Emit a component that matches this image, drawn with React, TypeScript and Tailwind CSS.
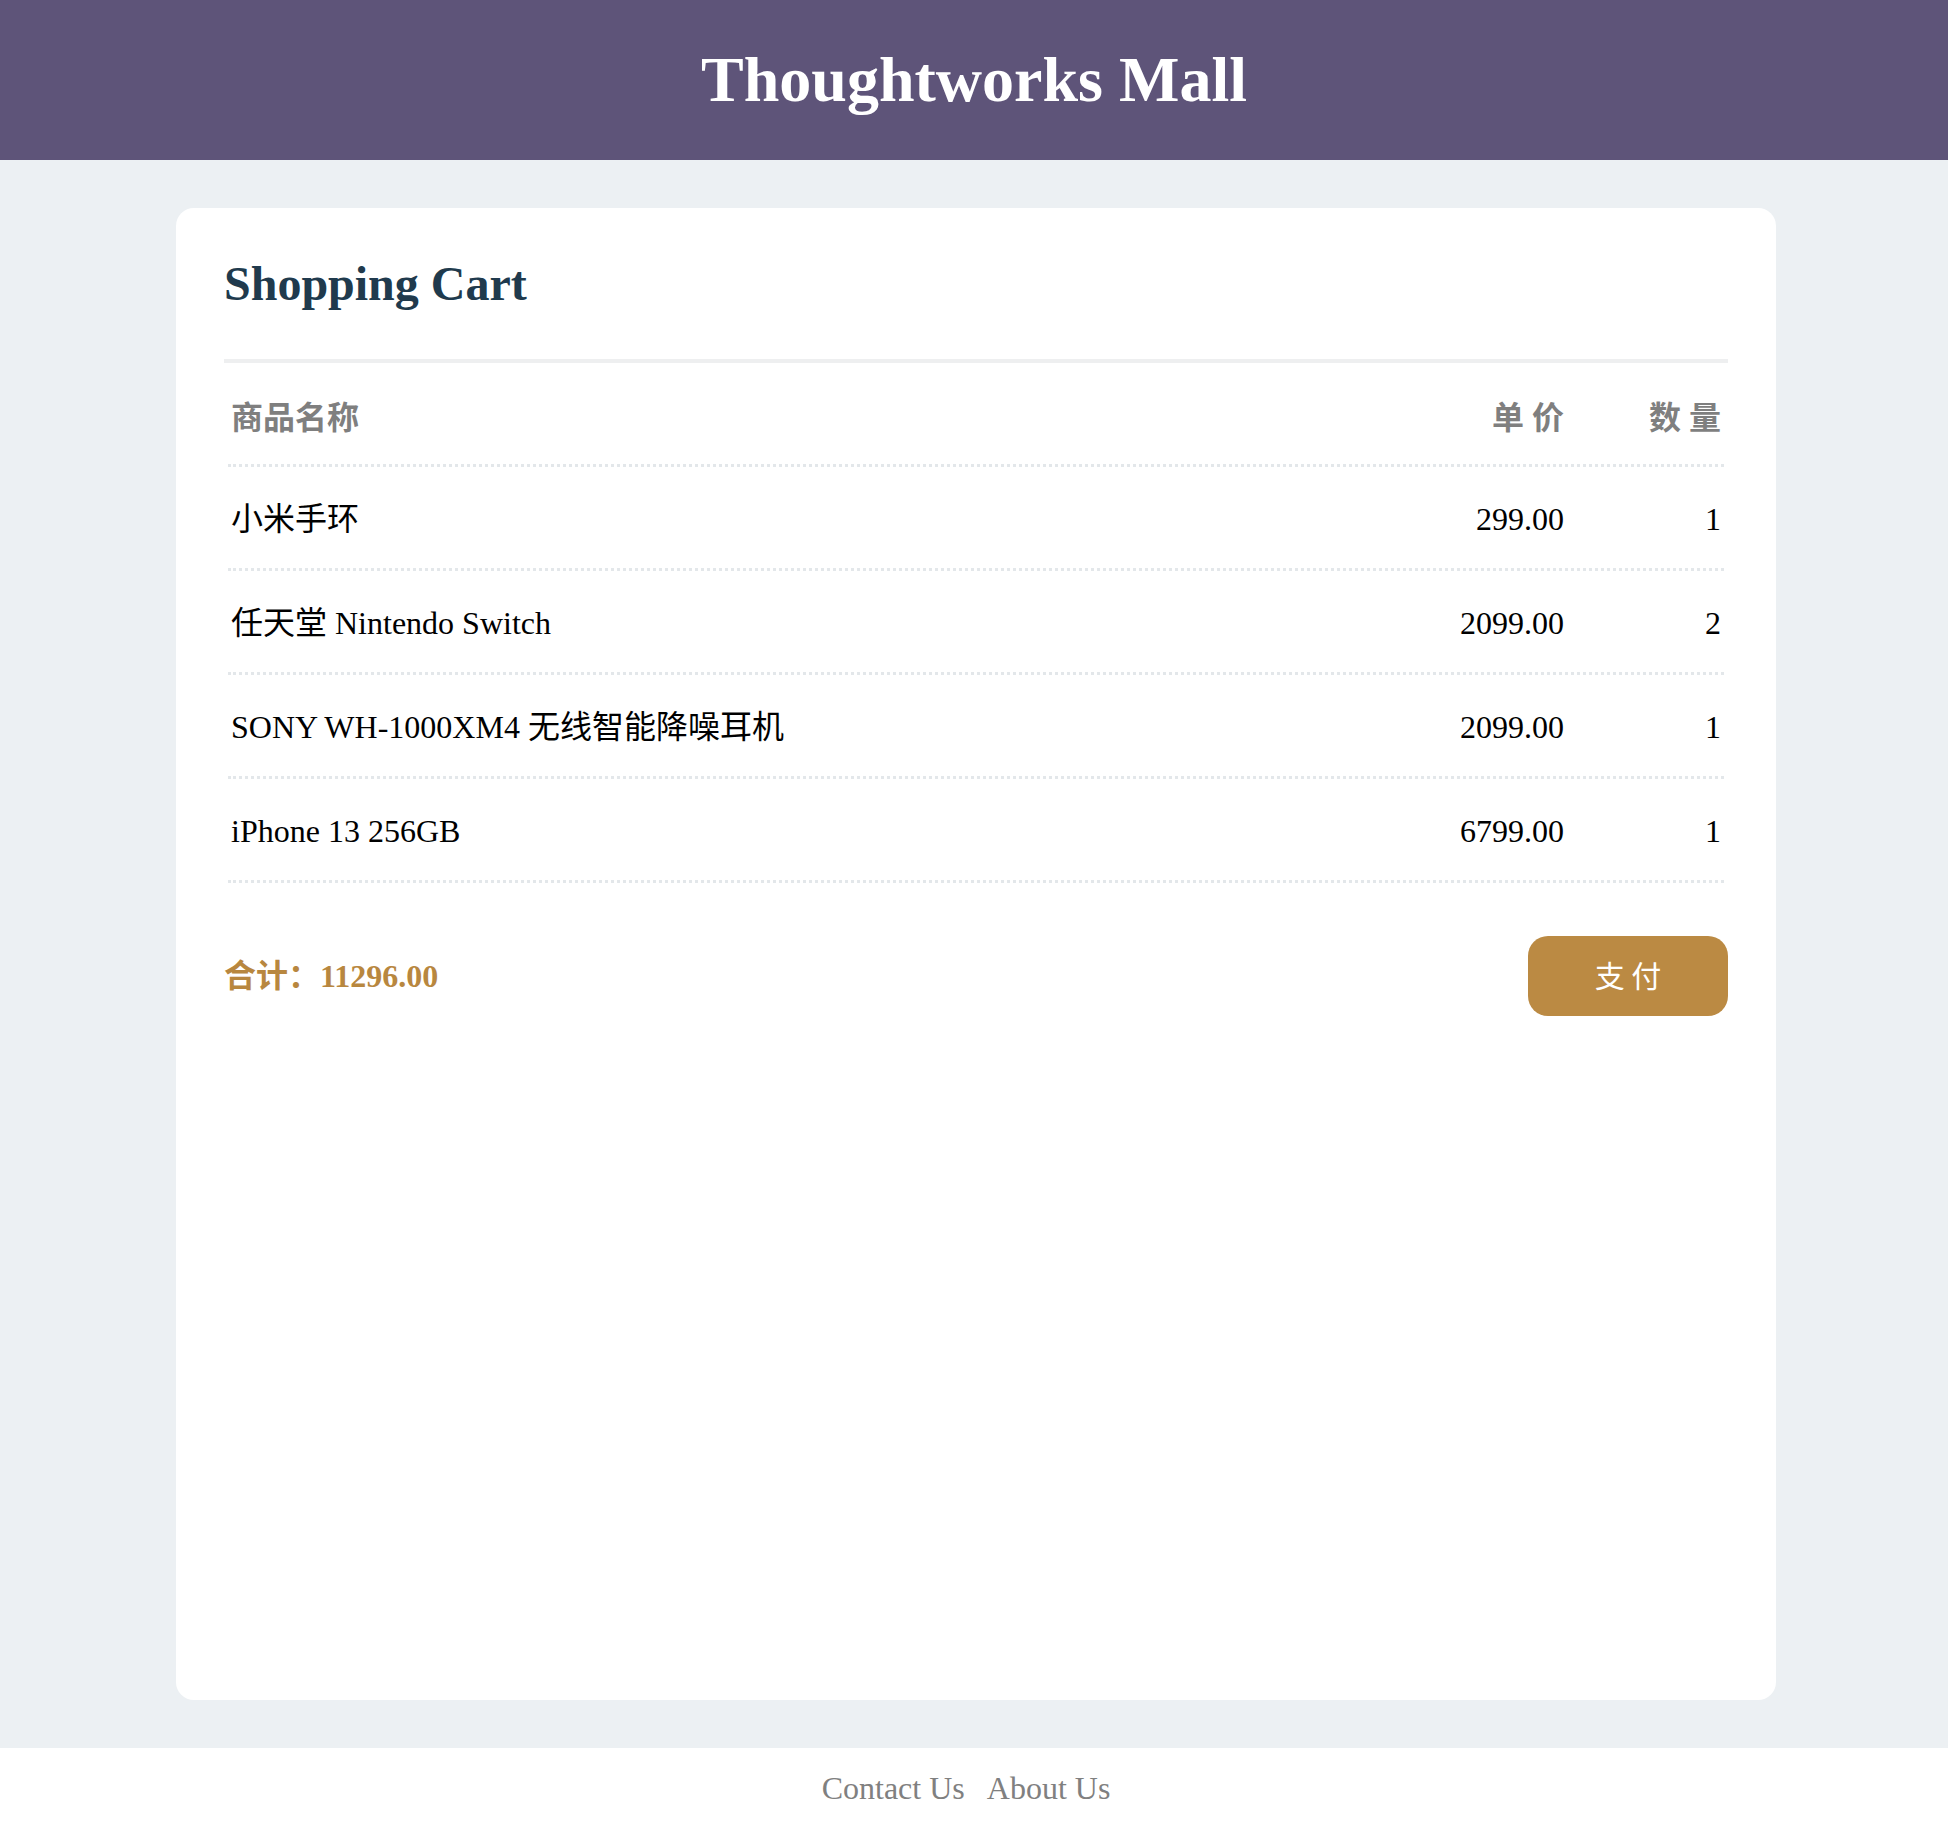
import React from "react";

const items = [
  { name: "小米手环", price: "299.00", qty: 1 },
  { name: "任天堂 Nintendo Switch", price: "2099.00", qty: 2 },
  { name: "SONY WH-1000XM4 无线智能降噪耳机", price: "2099.00", qty: 1 },
  { name: "iPhone 13 256GB", price: "6799.00", qty: 1 },
];

export default function App() {
  return (
    <div className="min-h-screen flex flex-col bg-[#ecf0f3] font-['Liberation_Serif','Noto_Sans_CJK_SC',serif]">
      <header className="h-[160px] shrink-0 bg-[#5e5479] flex items-center justify-center">
        <h1 className="text-[64px] font-bold text-white leading-[74px]">Thoughtworks Mall</h1>
      </header>

      <main className="flex-1 flex py-12 pl-[4px]">
        <div className="w-[1600px] mx-auto bg-white rounded-[18px] p-12 flex flex-col">
          <h2 className="text-[48px] font-bold text-[#203a4d] leading-[55px]">Shopping Cart</h2>
          <div className="mt-12 h-[4px] bg-[#eeeff0]" />

          <div className="px-[4px]">
            <div className="flex pt-[37px] pb-[27px] border-b-[3px] border-dotted border-[#e3e7ea] text-[32px] leading-[37px] font-bold text-[#7f7f7f]">
              <div className="flex-1 px-[3px]">商品名称</div>
              <div className="w-[140px] px-[3px] text-right">单 价</div>
              <div className="w-[157px] px-[3px] text-right">数 量</div>
            </div>
            {items.map((it) => (
              <div
                key={it.name}
                className="flex pt-[34px] pb-[30px] border-b-[3px] border-dotted border-[#e3e7ea] text-[32px] leading-[37px] text-black"
              >
                <div className="flex-1 px-[3px]">{it.name}</div>
                <div className="w-[140px] px-[3px] text-right">{it.price}</div>
                <div className="w-[157px] px-[3px] text-right">{it.qty}</div>
              </div>
            ))}
          </div>

          <div className="mt-[53px] flex items-center justify-between">
            <div className="text-[32px] leading-[37px] font-bold text-[#b8873f]">
              合计：11296.00
            </div>
            <button className="w-[200px] h-[80px] pb-[4px] rounded-[20px] bg-[#bb8a43] text-white text-[30px] font-['Noto_Sans_CJK_SC',sans-serif]">
              支 付
            </button>
          </div>
        </div>
      </main>

      <footer className="h-[80px] shrink-0 bg-white flex items-center justify-center gap-[22px] pr-[16px] text-[32px] leading-[37px] text-[#808080]">
        <a>Contact Us</a>
        <a>About Us</a>
      </footer>
    </div>
  );
}
